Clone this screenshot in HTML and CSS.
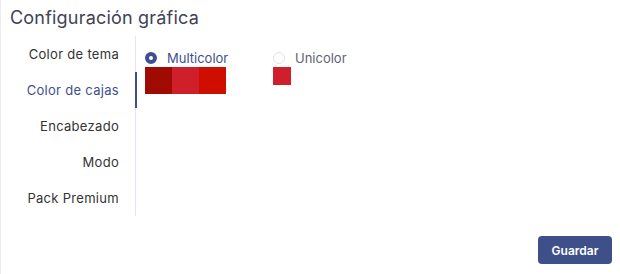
FILE: index.html
```html
<!DOCTYPE html>
<html lang="es">
<head>
  <meta charset="UTF-8">
  <title>Configuración gráfica</title>
  <link rel="stylesheet" href="styles.css">
</head>
<body>
  <div class="card">
    <h2 class="title">Configuración gráfica</h2>
    <div class="body">
      <nav class="tabs">
        <a class="tab">Color de tema</a>
        <a class="tab active">Color de cajas</a>
        <a class="tab">Encabezado</a>
        <a class="tab">Modo</a>
        <a class="tab">Pack Premium</a>
      </nav>
      <div class="panel">
        <div class="option checked">
          <label class="radio-row"><span class="radio"></span><span class="label">Multicolor</span></label>
          <div class="swatches">
            <span class="swatch" style="background:#a10a00"></span>
            <span class="swatch" style="background:#cf1f2b"></span>
            <span class="swatch" style="background:#d00e00"></span>
          </div>
        </div>
        <div class="option">
          <label class="radio-row"><span class="radio"></span><span class="label">Unicolor</span></label>
          <div class="swatches">
            <span class="swatch small" style="background:#cf1f2b"></span>
          </div>
        </div>
      </div>
    </div>
    <div class="footer">
      <button class="btn">Guardar</button>
    </div>
  </div>
</body>
</html>
```

FILE: styles.css
```css
body { margin: 0; font-family: Inter, "Open Sans", sans-serif; color: #3f4254; background: #fff; }
.card { height: 274px; box-sizing: border-box; border-left: 1px solid #ececf1; }
.title { margin: 0; padding: 6px 0 0 9px; font-size: 18px; line-height: 24px; font-weight: 400; letter-spacing: 0.2px; color: #3f4254; }
.body { display: flex; margin-top: 6px; }
.tabs { display: flex; flex-direction: column; width: 134px; border-right: 1px solid #e4e6ef; }
.tab { position: relative; height: 36px; display: flex; align-items: center; justify-content: flex-end; padding-right: 16px; font-size: 13px; color: #333; letter-spacing: 0.3px; }
.tab.active { color: #3e4f8f; }
.tab.active::after { content: ""; position: absolute; right: -2px; top: 0; width: 2px; height: 36px; background: #3e4f8f; }
.panel { display: flex; padding: 14px 0 0 9px; }
.option { width: 128px; }
.radio-row { display: flex; align-items: center; height: 16px; }
.radio { width: 12px; height: 12px; box-sizing: border-box; border-radius: 50%; border: 1px solid #e1e3ea; background: #fff; }
.option.checked .radio { border: 4px solid #3e4f8f; }
.label { margin-left: 10px; font-size: 13px; color: #5e6278; }
.option.checked .label { color: #3e4f8f; }
.swatches { display: flex; margin-top: 1px; }
.swatch { width: 27px; height: 27px; }
.swatch.small { width: 18px; height: 18px; }
.footer { display: flex; justify-content: flex-end; padding: 20px 8px 0 0; }
.btn { width: 74px; height: 28px; border: none; border-radius: 4px; background: #3e4f8a; color: #fff; font-family: inherit; font-size: 12px; font-weight: 600; cursor: pointer; }
```
